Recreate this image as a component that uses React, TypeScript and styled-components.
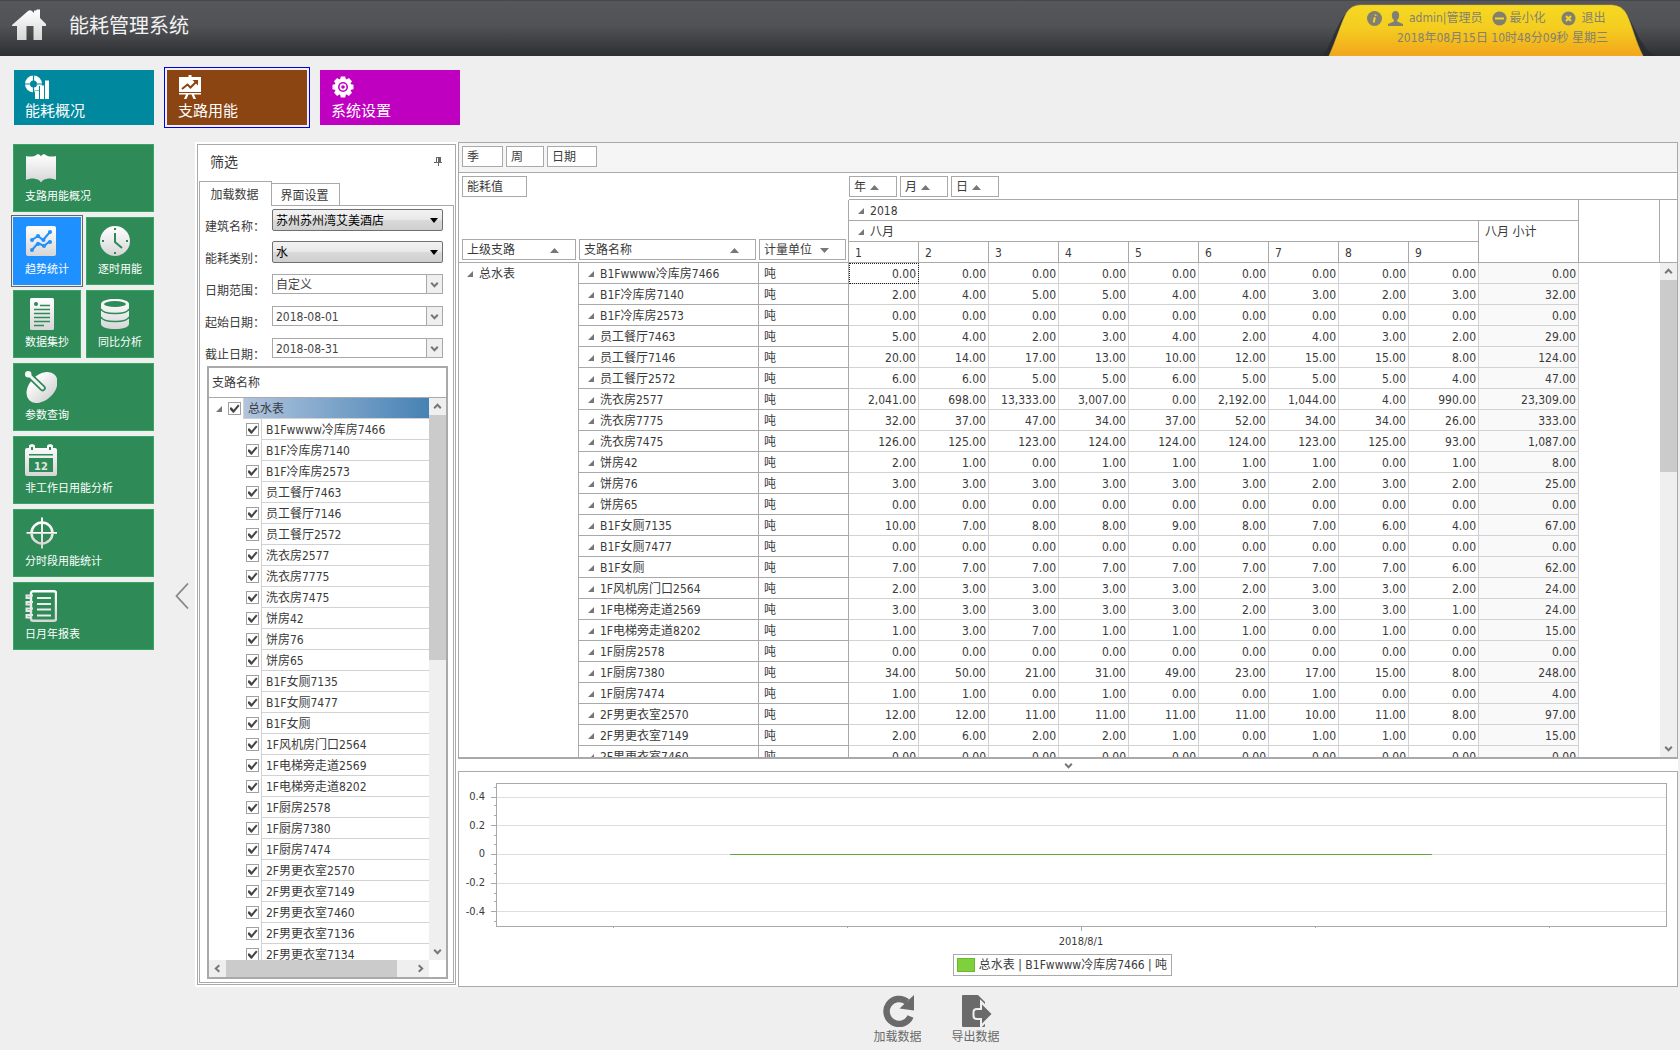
import React, { useState } from 'react';
import styled, { createGlobalStyle, css } from 'styled-components';

const LINE = '#a9a9a9';
const SOFT = '#d2d2d2';
const TEXT = '#3a3a3a';

const Global = createGlobalStyle`
  *, *::before, *::after { box-sizing: border-box; }
  body {
    margin: 0;
    background: #efefef;
    color: ${TEXT};
    font: 12px/16px 'DejaVu Sans Condensed', 'Noto Sans CJK SC', sans-serif;
  }
  button, input, select { font: inherit; color: inherit; margin: 0; }
  button { cursor: pointer; padding: 0; border: 0; background: none; text-align: left; }
  svg { display: block; flex: none; }
`;

const Page = styled.div`
  display: flex;
  flex-direction: column;
  height: 100vh;
  overflow: hidden;
`;

/* ---------- header ---------- */

const Header = styled.header`
  display: flex;
  align-items: center;
  flex: none;
  height: 56px;
  padding: 0 20px 0 12px;
  border-top: 1px solid #47484b;
  background: linear-gradient(#56575b, #515256 45%, #2d3032);
`;

const Brand = styled.div`
  display: flex;
  align-items: center;
  gap: 21px;
  margin-right: auto;
  padding-bottom: 8px;
`;

const Title = styled.h1`
  margin: 0;
  color: #f2f2f2;
  font: 400 20px/28px 'Noto Sans CJK SC', sans-serif;
`;

const UserTab = styled.div`
  position: relative;
  width: 340px;
  height: 55px;
  padding-top: 7px;
  color: #84826f;
`;

const TabShape = styled.svg`
  position: absolute;
  left: 0;
  bottom: 0;
`;

const UserRow = styled.div<{ $indent: number }>`
  position: relative;
  display: flex;
  align-items: center;
  height: 20px;
  padding-left: ${(p) => p.$indent}px;
  white-space: pre;
`;

const UserButton = styled.button<{ $gap: number; $after: number }>`
  display: flex;
  align-items: center;
  gap: ${(p) => p.$gap}px;
  margin-right: ${(p) => p.$after}px;
`;

/* ---------- tiles ---------- */

const TopNav = styled.nav`
  display: flex;
  gap: 13px;
  flex: none;
  padding: 14px 14px 17px;
`;

const TopTile = styled.button<{ $color: string; $active?: boolean }>`
  display: flex;
  flex-direction: column;
  justify-content: space-between;
  width: 140px;
  height: 55px;
  padding: 5px 11px;
  background: ${(p) => p.$color};
  color: #fff;
  font: 15px/20px 'Noto Sans CJK SC', sans-serif;
  ${(p) => p.$active && css`
    outline: 1px solid #0000e0;
    outline-offset: 2px;
  `}
`;

const Main = styled.div`
  display: flex;
  flex: 1;
  min-height: 0;
  padding-right: 2px;
`;

const SideNav = styled.nav`
  display: grid;
  grid-template-columns: 68px 68px;
  grid-auto-rows: 68px;
  gap: 5px;
  flex: none;
  width: 154px;
  padding: 2px 0 0 13px;
`;

const SideTile = styled.button<{ $wide?: boolean; $active?: boolean }>`
  display: flex;
  flex-direction: column;
  justify-content: space-between;
  grid-column: ${(p) => (p.$wide ? 'span 2' : 'span 1')};
  padding: 7px 11px 8px;
  border: 1px solid #35a763;
  background: #2e8b57;
  color: #fff;
  font: 11px/16px 'Noto Sans CJK SC', sans-serif;
  white-space: nowrap;
  ${(p) => p.$active && css`
    border-color: #1e90ff;
    background: #1e90ff;
    outline: 1px solid #666;
    outline-offset: 1px;
  `}
`;

const Collapse = styled.button`
  display: flex;
  align-items: center;
  justify-content: center;
  flex: none;
  width: 41px;
  padding-left: 15px;
`;

const Column = styled.div`
  display: flex;
  flex-direction: column;
  flex: 1;
  min-width: 0;
`;

const Workspace = styled.main`
  display: flex;
  flex: 1;
  min-height: 0;
  background: #fff;
`;

/* ---------- filter panel ---------- */

const FilterPanel = styled.section`
  display: flex;
  flex-direction: column;
  flex: none;
  width: 259px;
  margin: 2px;
  padding: 0 1px 1px;
  border: 1px solid ${LINE};
`;

const FilterHead = styled.div`
  display: flex;
  align-items: center;
  justify-content: space-between;
  flex: none;
  height: 36px;
  padding: 0 12px 4px 11px;
`;

const FilterTitle = styled.h2`
  margin: 0;
  font: 400 14px/20px 'Noto Sans CJK SC', sans-serif;
`;

const Tabs = styled.div`
  display: flex;
  align-items: flex-end;
  flex: none;
`;

const Tab = styled.button<{ $active?: boolean }>`
  position: relative;
  height: ${(p) => (p.$active ? 25 : 22)}px;
  width: ${(p) => (p.$active ? 73 : 68)}px;
  margin-bottom: ${(p) => (p.$active ? -1 : 0)}px;
  padding: 2px 2px 0 0;
  border: 1px solid ${LINE};
  border-left-width: ${(p) => (p.$active ? 1 : 0)}px;
  border-bottom: 0;
  background: #fff;
  text-align: center;
  z-index: ${(p) => (p.$active ? 1 : 0)};
`;

const TabPage = styled.div`
  display: flex;
  flex-direction: column;
  flex: 1;
  min-height: 0;
  border: 1px solid ${LINE};
`;

const Form = styled.form`
  display: grid;
  gap: 10px;
  flex: none;
  padding: 3px 10px 7px 5px;
`;

const FormRow = styled.div`
  display: flex;
  height: 22px;
  align-items: center;
`;

const Label = styled.label`
  align-self: flex-start;
  flex: none;
  width: 67px;
  padding-top: 10px;
`;

const Field = styled.div<{ $raised?: boolean }>`
  position: relative;
  display: flex;
  flex: 1;
  min-width: 0;
  height: ${(p) => (p.$raised ? 22 : 20)}px;
  border: 1px solid ${(p) => (p.$raised ? '#707070' : LINE)};
  border-radius: ${(p) => (p.$raised ? 2 : 0)}px;
  background: ${(p) => (p.$raised ? 'linear-gradient(#f2f2f2, #e8e8e8 50%, #d9d9d9 52%, #cfcfcf)' : '#fff')};
  color: ${(p) => (p.$raised ? '#000' : '#444')};
`;

const fieldText = css`
  flex: 1;
  min-width: 0;
  padding: 2px 3px 0;
  border: 0;
  background: none;
  outline: 0;
`;

const Select = styled.select`
  ${fieldText}
  appearance: none;
`;

const TextInput = styled.input`
  ${fieldText}
`;

const DropMark = styled.span<{ $boxed?: boolean }>`
  display: flex;
  align-items: center;
  justify-content: center;
  width: ${(p) => (p.$boxed ? 16 : 17)}px;
  border-left: ${(p) => (p.$boxed ? `1px solid ${LINE}` : '0')};
  background: ${(p) => (p.$boxed ? '#efefef' : 'none')};
  pointer-events: none;
`;

const TreeBox = styled.div`
  display: flex;
  flex-direction: column;
  flex: 1;
  min-height: 0;
  margin: 0 5px 3px 7px;
  border: 2px solid ${LINE};
`;

const TreeHead = styled.div`
  flex: none;
  height: 30px;
  padding-left: 3px;
  border-bottom: 1px solid ${LINE};
  line-height: 31px;
`;

const TreeBody = styled.div`
  display: flex;
  flex: 1;
  min-height: 0;
`;

const TreeList = styled.ul`
  flex: 1;
  min-width: 0;
  margin: 0;
  padding: 0;
  overflow: hidden;
  list-style: none;
`;

const TreeRow = styled.li<{ $root?: boolean }>`
  display: flex;
  align-items: center;
  gap: ${(p) => (p.$root ? 6 : 0)}px;
  height: 21px;
  padding-left: ${(p) => (p.$root ? 7 : 37)}px;
`;

const TreeLabel = styled.label<{ $root?: boolean }>`
  display: flex;
  flex: 1;
  align-items: center;
  gap: 2px;
  height: 21px;
`;

const TreeText = styled.span<{ $root?: boolean }>`
  flex: 1;
  height: 21px;
  padding-left: 4px;
  border-left: 1px solid ${SOFT};
  border-bottom: 1px solid ${SOFT};
  background: ${(p) => (p.$root ? 'linear-gradient(90deg, #b0c4de, #4682b4)' : 'none')};
  line-height: 23px;
  white-space: nowrap;
`;

const Check = styled.input`
  appearance: none;
  flex: none;
  width: 13px;
  height: 13px;
  border: 1px solid #a0a0a0;
  background: #fff;
  &:checked::before {
    content: '';
    display: block;
    width: 11px;
    height: 11px;
    background: #444;
    clip-path: polygon(9% 42%, 25% 42%, 42% 62%, 82% 14%, 96% 24%, 44% 88%, 36% 88%, 9% 58%);
  }
`;

/* ---------- scroll bars ---------- */

const Bar = styled.div<{ $horizontal?: boolean }>`
  display: flex;
  flex: none;
  flex-direction: ${(p) => (p.$horizontal ? 'row' : 'column')};
  ${(p) => (p.$horizontal ? 'height: 17px; margin-right: 17px;' : 'width: 17px;')}
  background: #efefef;
`;

const BarArrow = styled.button`
  display: flex;
  align-items: center;
  justify-content: center;
  flex: none;
  width: 17px;
  height: 17px;
`;

const BarPart = styled.div<{ $grow: number; $thumb?: boolean }>`
  flex: ${(p) => p.$grow} 0 0;
  background: ${(p) => (p.$thumb ? '#cbcbcb' : 'none')};
`;

/* ---------- pivot ---------- */

const Results = styled.section`
  display: flex;
  flex-direction: column;
  flex: 1;
  min-width: 0;
`;

const Pivot = styled.div`
  display: flex;
  flex-direction: column;
  flex: 1;
  min-height: 0;
  border: 1px solid ${LINE};
  border-bottom-width: 2px;
`;

const FilterBar = styled.div`
  display: flex;
  gap: 3px;
  flex: none;
  height: 30px;
  padding: 3px;
  border-bottom: 1px solid ${LINE};
  background: #f5f5f5;
`;

const FieldButton = styled.button<{ $w: number; $spread?: boolean }>`
  display: flex;
  align-items: center;
  justify-content: ${(p) => (p.$spread ? 'space-between' : 'flex-start')};
  gap: 4px;
  width: ${(p) => p.$w}px;
  height: 21px;
  padding: 1px ${(p) => (p.$spread ? 16 : 0)}px 0 4px;
  border: 1px solid ${LINE};
  background: #fff;
`;

const FieldGroup = styled.div`
  display: flex;
  gap: 3px;
`;

const Table = styled.table`
  width: 100%;
  table-layout: fixed;
  border-collapse: separate;
  border-spacing: 0;
`;

const Head = styled.th<{ $pad?: number; $right?: boolean; $area?: boolean; $bottom?: boolean }>`
  height: ${(p) => (p.$area ? 27 : 21)}px;
  padding: ${(p) => (p.$area ? 3 : 0)}px 0 0 ${(p) => p.$pad ?? 0}px;
  border-bottom: ${(p) => (p.$bottom === false ? '0' : `1px solid ${LINE}`)};
  border-right: ${(p) => (p.$right ? `1px solid ${LINE}` : '0')};
  font-weight: 400;
  text-align: left;
  vertical-align: top;
  line-height: 20px;
`;

const HeadText = styled.span`
  display: flex;
  align-items: center;
  gap: 6px;
  height: 20px;
  padding-top: 2px;
  white-space: nowrap;
`;

const Corner = styled(Head)`
  padding: 0 0 2px 3px;
  vertical-align: bottom;
`;

const BodyWrap = styled.div`
  display: flex;
  flex: 1;
  min-height: 0;
`;

const BodyClip = styled.div`
  flex: 1;
  min-width: 0;
  overflow: hidden;
`;

const RowHead = styled.th<{ $pad: number }>`
  height: 21px;
  padding: 0 0 0 ${(p) => p.$pad}px;
  border-right: 1px solid ${LINE};
  border-bottom: 1px solid ${LINE};
  font-weight: 400;
  text-align: left;
  vertical-align: top;
`;

const Cell = styled.td<{ $total?: boolean; $focus?: boolean }>`
  height: 21px;
  padding: 2px 2px 0 0;
  border-right: 1px solid ${SOFT};
  border-bottom: 1px solid ${SOFT};
  background: ${(p) => (p.$total ? '#f9f9f9' : '#fff')};
  line-height: 18px;
  text-align: right;
  ${(p) => p.$focus && css`
    outline: 1px dotted #222;
    outline-offset: -1px;
  `}
`;

const Splitter = styled.button`
  display: flex;
  align-items: center;
  justify-content: center;
  flex: none;
  height: 12px;
`;

/* ---------- chart ---------- */

const ChartPanel = styled.div`
  display: grid;
  grid-template-columns: 37px 1fr;
  grid-template-rows: 143px 28px 22px;
  flex: none;
  height: 216px;
  padding: 11px 11px 0 0;
  border: 1px solid ${LINE};
  font-size: 11px;
`;

const AxisY = styled.div`
  display: flex;
  flex-direction: column;
  padding-right: 11px;
  text-align: right;
`;

const AxisYLabel = styled.span`
  display: flex;
  flex: 1;
  align-items: center;
  justify-content: flex-end;
`;

const Plot = styled.svg`
  width: 100%;
  height: 143px;
  overflow: visible;
`;

const AxisX = styled.div`
  grid-column: 2;
  padding-top: 8px;
  text-align: center;
`;

const Legend = styled.div`
  grid-column: 1 / -1;
  display: flex;
  align-items: center;
  justify-self: center;
  gap: 4px;
  height: 22px;
  padding: 0 4px 0 3px;
  border: 1px solid ${LINE};
  font-size: 12px;
`;

const Swatch = styled.span`
  width: 18px;
  height: 14px;
  border: 1px solid #6fb52f;
  background: #7fd13b;
`;

/* ---------- footer ---------- */

const Footer = styled.footer`
  display: flex;
  justify-content: center;
  gap: 30px;
  flex: none;
  height: 63px;
  padding-top: 8px;
`;

const FooterButton = styled.button`
  display: flex;
  flex-direction: column;
  align-items: center;
  gap: 2px;
  width: 48px;
  height: 52px;
  color: #6a6a6a;
`;

/* ---------- glyphs ---------- */

const Chevron = ({ dir }: { dir: 'up' | 'down' | 'left' | 'right' }) => {
  const turn = { up: 0, right: 90, down: 180, left: 270 }[dir];
  return (
    <svg width="9" height="9" viewBox="0 0 9 9" fill="none" stroke="#777" strokeWidth="2">
      <path d="M1.2 6.3 4.5 2.8 7.8 6.3" transform={`rotate(${turn} 4.5 4.5)`} />
    </svg>
  );
};

const Open = () => (
  <svg width="6" height="6" viewBox="0 0 6 6"><path d="M6 0V6H0Z" fill="#777" /></svg>
);

const Sort = ({ down }: { down?: boolean }) => (
  <svg width="9" height="5" viewBox="0 0 9 5">
    <path d={down ? 'M0 0H9L4.5 5Z' : 'M0 5H9L4.5 0Z'} fill="#777" />
  </svg>
);

const ScrollBar = ({ horizontal, thumb, rest }: { horizontal?: boolean; thumb: number; rest: number }) => (
  <Bar $horizontal={horizontal}>
    <BarArrow type="button" aria-label={horizontal ? '向左' : '向上'}><Chevron dir={horizontal ? 'left' : 'up'} /></BarArrow>
    <BarPart $grow={thumb} $thumb />
    <BarPart $grow={rest} />
    <BarArrow type="button" aria-label={horizontal ? '向右' : '向下'}><Chevron dir={horizontal ? 'right' : 'down'} /></BarArrow>
  </Bar>
);

const G = 'url(#silver)';
const sideIcon = (children: React.ReactNode) => (
  <svg width="32" height="32" viewBox="0 0 32 32">{children}</svg>
);

const icons = {
  book: sideIcon(
    <path fill={G} d="M1 4C4 5 9 5 12 2.5C14 1.500 15.500 3 16 4.500C16.500 3 18 1.500 20 2.500C23 5 28 5 31 4V28C27 26 22 26 18.500 28C17 28.500 16.500 30 16 30.500C15.500 30 15 28.500 13.500 28C10 26 5 26 1 28Z" />,
  ),
  trend: sideIcon(
    <>
      <rect x="1" y="1" width="30" height="30" rx="2" fill={G} />
      <g stroke="#1e90ff" strokeWidth="2" fill="none">
        <path d="M7 15 13 11 18 15 25 7M7 25 13 18 19 21 25 16" />
      </g>
      <g fill="#1e90ff">
        {[[7, 15], [13, 11], [18.5, 15], [25, 7], [7, 25], [13, 19], [19, 21], [25, 17]].map(([x, y]) => (
          <circle key={`${x}-${y}`} cx={x} cy={y} r="2" />
        ))}
      </g>
    </>,
  ),
  clock: sideIcon(
    <>
      <circle cx="17" cy="16" r="15" fill={G} />
      <path d="M17 8V17L24 23" stroke="#2e8b57" strokeWidth="2" fill="none" />
      <path d="M16 3h2v2h-2zM16 27h2v2h-2zM4 15h2v2H4zM28 15h2v2h-2z" fill="#2e8b57" />
    </>,
  ),
  doc: sideIcon(
    <>
      <rect x="5" y="0" width="24" height="32" rx="1.500" fill={G} />
      <circle cx="11" cy="6" r="2" fill="#2e8b57" />
      <path d="M15 7.500H25M9 11.500H25M9 15.500H25M9 19.500H25M9 23.500H25M9 27.500H19" stroke="#2e8b57" strokeWidth="1.500" />
    </>,
  ),
  db: sideIcon(
    <>
      <path fill={G} d="M3 6C3 3 9 1 17 1S31 3 31 6V26C31 29 25 31 17 31S3 29 3 26Z" />
      <ellipse cx="17" cy="6" rx="11" ry="3" fill="#2e8b57" />
      <path d="M3 11C4 14 10 15.500 17 15.500S30 14 31 11M3 19C4 22 10 23.500 17 23.500S30 22 31 19" stroke="#2e8b57" strokeWidth="1.500" fill="none" />
    </>,
  ),
  dish: sideIcon(
    <>
      <ellipse cx="17" cy="16.500" rx="18" ry="12.500" transform="rotate(-45 17 16.500)" fill={G} />
      <path d="M3 3 17.500 17" stroke="#2e8b57" strokeWidth="6.500" strokeLinecap="round" />
      <path d="M3 3 17.500 17" stroke="#f4f4f4" strokeWidth="3" strokeLinecap="round" />
      <circle cx="3.200" cy="3.200" r="3.200" fill="#f8f8f8" />
    </>,
  ),
  calendar: sideIcon(
    <>
      <path fill={G} fillRule="evenodd" d="M2 4H4V2C4 -0.500 10 -0.500 10 2V4H22V2C22 -0.500 28 -0.500 28 2V4H30Q32 4 32 6V30Q32 32 30 32H2Q0 32 0 30V6Q0 4 2 4ZM6 3V6H8V3ZM24 3V6H26V3ZM4 10V11.500H28V10ZM4 14V28H28V14Z" />
      <text x="16" y="25.500" textAnchor="middle" fontSize="11" fontWeight="700" fontFamily="DejaVu Sans Condensed, sans-serif" fill="#e4e4e4">12</text>
    </>,
  ),
  target: sideIcon(
    <g fill="none" stroke={G} strokeWidth="2">
      <circle cx="17" cy="16" r="10.500" strokeWidth="2.500" />
      <rect x="2" y="15.500" width="30" height="1" strokeWidth="1" />
      <rect x="16.500" y="1" width="1" height="30" strokeWidth="1" />
    </g>,
  ),
  notebook: sideIcon(
    <g fill="none" stroke={G}>
      <rect x="6" y="1.200" width="25" height="29.600" rx="2" strokeWidth="2.400" />
      <path d="M12 8H26M12 14H26M12 19.500H26M12 25.500H26" stroke="#ececec" strokeWidth="2" />
      <path d="M8 5.500H1.500V8H6M8 12H1.500V14.500H6M8 18.500H1.500V21H6M8 25H1.500V27.500H6" stroke="#e8e8e8" strokeWidth="2" />
    </g>,
  ),
};

const gearTeeth = Array.from({ length: 8 }, (_, i) => i * 45);

/* ---------- data ---------- */

const topTiles = [
  {
    label: '能耗概况',
    color: '#00899e',
    icon: (
      <svg width="24" height="24" viewBox="0 0 24 24" fill="#fff">
        <circle cx="8.500" cy="9" r="6" fill="none" stroke="#fff" strokeWidth="5" />
        <path d="M8.500 0V6M8.500 12V18M-0.500 9H5.500M11.500 9H17.500" stroke="#00899e" strokeWidth="1.200" />
        <path d="M9.500 15.500H14V11H18.500V5H24V24H9.500Z" fill="#00899e" />
        <path d="M10 16H14V24H10ZM15 10.500H19V24H15ZM20 5.500H24V24H20Z" />
      </svg>
    ),
  },
  {
    label: '支路用能',
    color: '#8b4513',
    active: true,
    icon: (
      <svg width="24" height="24" viewBox="0 0 24 24" fill="#fff">
        <path d="M10.500 0H13.500V2H23V17H1V2H10.500ZM1 18H23V19.500H1ZM8 19.500H10.500L8.500 24H6ZM13.500 19.500H16L18 24H15.500Z" />
        <path d="M4 14 9.500 9.500 12.500 12.500 18 7" fill="none" stroke="#8b4513" strokeWidth="2" />
        <path d="M14.500 5H20V10.500Z" fill="#8b4513" />
      </svg>
    ),
  },
  {
    label: '系统设置',
    color: '#c000c0',
    icon: (
      <svg width="24" height="24" viewBox="0 0 24 24" fill="#fff">
        {gearTeeth.map((a) => (
          <path key={a} d="M9 5 9.800 1.500H14.200L15 5Z" transform={`rotate(${a} 12 12)`} />
        ))}
        <circle cx="12" cy="12" r="8.300" />
        <circle cx="12" cy="12" r="5" fill="#c000c0" />
        <circle cx="12" cy="12" r="3.400" />
        <circle cx="12" cy="12" r="1.800" fill="#c000c0" />
      </svg>
    ),
  },
];

const sideTiles = [
  { label: '支路用能概况', icon: icons.book, wide: true },
  { label: '趋势统计', icon: icons.trend, active: true },
  { label: '逐时用能', icon: icons.clock },
  { label: '数据集抄', icon: icons.doc },
  { label: '同比分析', icon: icons.db },
  { label: '参数查询', icon: icons.dish, wide: true },
  { label: '非工作日用能分析', icon: icons.calendar, wide: true },
  { label: '分时段用能统计', icon: icons.target, wide: true },
  { label: '日月年报表', icon: icons.notebook, wide: true },
];

const rows: [string, number[], number][] = [
  ['B1Fwwww冷库房7466', [0, 0, 0, 0, 0, 0, 0, 0, 0], 0],
  ['B1F冷库房7140', [2, 4, 5, 5, 4, 4, 3, 2, 3], 32],
  ['B1F冷库房2573', [0, 0, 0, 0, 0, 0, 0, 0, 0], 0],
  ['员工餐厅7463', [5, 4, 2, 3, 4, 2, 4, 3, 2], 29],
  ['员工餐厅7146', [20, 14, 17, 13, 10, 12, 15, 15, 8], 124],
  ['员工餐厅2572', [6, 6, 5, 5, 6, 5, 5, 5, 4], 47],
  ['洗衣房2577', [2041, 698, 13333, 3007, 0, 2192, 1044, 4, 990], 23309],
  ['洗衣房7775', [32, 37, 47, 34, 37, 52, 34, 34, 26], 333],
  ['洗衣房7475', [126, 125, 123, 124, 124, 124, 123, 125, 93], 1087],
  ['饼房42', [2, 1, 0, 1, 1, 1, 1, 0, 1], 8],
  ['饼房76', [3, 3, 3, 3, 3, 3, 2, 3, 2], 25],
  ['饼房65', [0, 0, 0, 0, 0, 0, 0, 0, 0], 0],
  ['B1F女厕7135', [10, 7, 8, 8, 9, 8, 7, 6, 4], 67],
  ['B1F女厕7477', [0, 0, 0, 0, 0, 0, 0, 0, 0], 0],
  ['B1F女厕', [7, 7, 7, 7, 7, 7, 7, 7, 6], 62],
  ['1F风机房门口2564', [2, 3, 3, 3, 3, 2, 3, 3, 2], 24],
  ['1F电梯旁走道2569', [3, 3, 3, 3, 3, 2, 3, 3, 1], 24],
  ['1F电梯旁走道8202', [1, 3, 7, 1, 1, 1, 0, 1, 0], 15],
  ['1F厨房2578', [0, 0, 0, 0, 0, 0, 0, 0, 0], 0],
  ['1F厨房7380', [34, 50, 21, 31, 49, 23, 17, 15, 8], 248],
  ['1F厨房7474', [1, 1, 0, 1, 0, 0, 1, 0, 0], 4],
  ['2F男更衣室2570', [12, 12, 11, 11, 11, 11, 10, 11, 8], 97],
  ['2F男更衣室7149', [2, 6, 2, 2, 1, 0, 1, 1, 0], 15],
  ['2F男更衣室7460', [0, 0, 0, 0, 0, 0, 0, 0, 0], 0],
];

const branches = [...rows.map((r) => r[0]), '2F男更衣室7136', '2F男更衣室7134'];
const days = [1, 2, 3, 4, 5, 6, 7, 8, 9];
const format = (n: number) => n.toLocaleString('en-US', { minimumFractionDigits: 2 });

const Columns = ({ withBar }: { withBar?: boolean }) => (
  <colgroup>
    <col width="120" />
    <col width="180" />
    <col width="90" />
    {days.map((d) => <col key={d} width="70" />)}
    <col width="100" />
    <col />
    {withBar && <col width="17" />}
  </colgroup>
);

const Dropdown = ({ id, value, raised }: { id: string; value: string; raised?: boolean }) => (
  <Field $raised={raised}>
    <Select id={id} defaultValue={value}><option>{value}</option></Select>
    <DropMark $boxed={!raised}>
      {raised
        ? <svg width="8" height="5" viewBox="0 0 8 5"><path d="M0 0H8L4 5Z" fill="#000" /></svg>
        : <Chevron dir="down" />}
    </DropMark>
  </Field>
);

const DateField = ({ id, value }: { id: string; value: string }) => (
  <Field>
    <TextInput id={id} defaultValue={value} />
    <DropMark $boxed><Chevron dir="down" /></DropMark>
  </Field>
);

const TopBar = () => (
  <Header>
    <Brand>
      <svg width="36" height="36" viewBox="0 0 36 36">
        <path fill={G} d="M0 18 16 4C17.500 3 18.500 3 20 4L22 6V3.500H24.500V2.500H28V11L34 17V19H30V33H21.500V19H14.500V33H5V19H0Z" />
      </svg>
      <Title>能耗管理系统</Title>
    </Brand>
    <UserTab>
      <TabShape width="340" height="55" viewBox="0 0 340 55">
        <defs>
          <linearGradient id="tab" x1="0" y1="0" x2="0" y2="1">
            <stop offset="0" stopColor="#f5d922" />
            <stop offset="0.450" stopColor="#f4cd20" />
            <stop offset="1" stopColor="#f3a51c" />
          </linearGradient>
        </defs>
        <path fill="#292c2e" opacity="0.800" d="M2 55C12 46 18 12 36 4H296C314 12 316 46 336 55Z" />
        <path fill="url(#tab)" stroke="#d9b43a" strokeWidth="0.500" d="M9 55C17 37 22 19 27 11Q32 4 40 4H292Q302 4 307 14C313 27 315 39 323 55Z" />
      </TabShape>
      <UserRow $indent={47}>
        <UserButton type="button" aria-label="关于" $gap={0} $after={6}>
          <svg width="15" height="15" viewBox="0 0 15 15">
            <circle cx="7.500" cy="7.500" r="7.500" fill="#807f72" />
            <path d="M8.700 3.500 8.400 4.800M7.900 6.200 6.700 11.500" stroke="#f4d322" strokeWidth="2" />
          </svg>
        </UserButton>
        <UserButton type="button" $gap={6} $after={10}>
          <svg width="15" height="15" viewBox="0 0 15 15" fill="#807f72">
            <ellipse cx="7.500" cy="4.500" rx="3.600" ry="4.500" />
            <path d="M5.800 7H9.200V10.500L15 13V15H0V13L5.800 10.500Z" />
          </svg>
          admin|管理员
        </UserButton>
        <UserButton type="button" $gap={2} $after={15}>
          <svg width="15" height="15" viewBox="0 0 15 15">
            <circle cx="7.500" cy="7.500" r="7" fill="#807f72" />
            <path d="M3 7.500H12" stroke="#f4d322" strokeWidth="2" />
          </svg>
          最小化
        </UserButton>
        <UserButton type="button" $gap={6} $after={0}>
          <svg width="15" height="15" viewBox="0 0 15 15">
            <circle cx="7.500" cy="7.500" r="7" fill="#807f72" />
            <path d="M5 5 10 10M10 5 5 10" stroke="#f4d322" strokeWidth="2.200" />
          </svg>
          退出
        </UserButton>
      </UserRow>
      <UserRow $indent={77}>2018年08月15日 10时48分09秒 星期三</UserRow>
    </UserTab>
  </Header>
);

const FilterSide = () => {
  const [off, setOff] = useState<string[]>([]);
  const toggle = (name: string) =>
    setOff((list) => (list.includes(name) ? list.filter((n) => n !== name) : [...list, name]));
  return (
    <FilterPanel>
      <FilterHead>
        <FilterTitle>筛选</FilterTitle>
        <button type="button" aria-label="固定">
          <svg width="8" height="9" viewBox="0 0 8 9" shapeRendering="crispEdges" fill="#666">
            <path d="M1 0H7V1H3V5H2V0ZM4 0H7V5H4ZM0 5H8V6H0ZM4 6H5V9H4Z" />
          </svg>
        </button>
      </FilterHead>
      <Tabs role="tablist">
        <Tab type="button" role="tab" aria-selected $active>加载数据</Tab>
        <Tab type="button" role="tab">界面设置</Tab>
      </Tabs>
      <TabPage>
        <Form>
          <FormRow><Label htmlFor="building">建筑名称：</Label><Dropdown id="building" value="苏州苏州湾艾美酒店" raised /></FormRow>
          <FormRow><Label htmlFor="kind">能耗类别：</Label><Dropdown id="kind" value="水" raised /></FormRow>
          <FormRow><Label htmlFor="range">日期范围：</Label><Dropdown id="range" value="自定义" /></FormRow>
          <FormRow><Label htmlFor="from">起始日期：</Label><DateField id="from" value="2018-08-01" /></FormRow>
          <FormRow><Label htmlFor="to">截止日期：</Label><DateField id="to" value="2018-08-31" /></FormRow>
        </Form>
        <TreeBox>
          <TreeHead>支路名称</TreeHead>
          <TreeBody>
            <TreeList>
              <TreeRow $root>
                <Open />
                <TreeLabel>
                  <Check type="checkbox" checked={!off.includes('总水表')} onChange={() => toggle('总水表')} />
                  <TreeText $root>总水表</TreeText>
                </TreeLabel>
              </TreeRow>
              {branches.map((name) => (
                <TreeRow key={name}>
                  <TreeLabel>
                    <Check type="checkbox" checked={!off.includes(name)} onChange={() => toggle(name)} />
                    <TreeText>{name}</TreeText>
                  </TreeLabel>
                </TreeRow>
              ))}
            </TreeList>
            <ScrollBar thumb={245} rest={283} />
          </TreeBody>
          <ScrollBar horizontal thumb={171} rest={15} />
        </TreeBox>
      </TabPage>
    </FilterPanel>
  );
};

const PivotGrid = () => (
  <Pivot>
    <FilterBar>
      <FieldButton type="button" $w={41}>季</FieldButton>
      <FieldButton type="button" $w={38}>周</FieldButton>
      <FieldButton type="button" $w={50}>日期</FieldButton>
    </FilterBar>
    <Table>
      <Columns withBar />
      <thead>
        <tr>
          <Head colSpan={3} $area $pad={3} $bottom={false}><FieldButton type="button" $w={65}>能耗值</FieldButton></Head>
          <Head colSpan={12} $area>
            <FieldGroup>
              {['年', '月', '日'].map((f) => (
                <FieldButton key={f} type="button" $w={48}>{f}<Sort /></FieldButton>
              ))}
            </FieldGroup>
          </Head>
        </tr>
        <tr>
          <Corner colSpan={3} rowSpan={3} $right>
            <FieldGroup>
              <FieldButton type="button" $w={114} $spread>上级支路<Sort /></FieldButton>
              <FieldButton type="button" $w={177} $spread>支路名称<Sort /></FieldButton>
              <FieldButton type="button" $w={87} $spread>计量单位<Sort down /></FieldButton>
            </FieldGroup>
          </Corner>
          <Head colSpan={10} $pad={9} $right><HeadText><Open />2018</HeadText></Head>
          <Head rowSpan={3} $right />
          <Head rowSpan={3} />
        </tr>
        <tr>
          <Head colSpan={9} $pad={9} $right><HeadText><Open />八月</HeadText></Head>
          <Head rowSpan={2} $pad={6} $right><HeadText>八月 小计</HeadText></Head>
        </tr>
        <tr>
          {days.map((d) => <Head key={d} $pad={6} $right><HeadText>{d}</HeadText></Head>)}
        </tr>
      </thead>
    </Table>
    <BodyWrap>
      <BodyClip>
        <Table>
          <Columns />
          <tbody>
            {rows.map(([name, values, total], r) => (
              <tr key={name}>
                {r === 0 && (
                  <RowHead rowSpan={rows.length} $pad={8}><HeadText><Open />总水表</HeadText></RowHead>
                )}
                <RowHead $pad={9}><HeadText><Open />{name}</HeadText></RowHead>
                <RowHead $pad={5}><HeadText>吨</HeadText></RowHead>
                {values.map((v, c) => (
                  <Cell key={days[c]} $focus={r === 0 && c === 0}>{format(v)}</Cell>
                ))}
                <Cell $total>{format(total)}</Cell>
                <td />
              </tr>
            ))}
          </tbody>
        </Table>
      </BodyClip>
      <ScrollBar thumb={192} rest={268} />
    </BodyWrap>
  </Pivot>
);

const minorY = [3, 16, 23, 37, 43, 57, 63, 77, 83, 97];

const Chart = () => (
  <ChartPanel>
    <AxisY>
      {['0.4', '0.2', '0', '-0.2', '-0.4'].map((t) => <AxisYLabel key={t}>{t}</AxisYLabel>)}
    </AxisY>
    <Plot shapeRendering="crispEdges">
      {[10, 30, 50, 70, 90].map((y) => (
        <g key={y}>
          <line x1="0" x2="100%" y1={`${y}%`} y2={`${y}%`} stroke="#dedede" />
          <line x1="-5" x2="0" y1={`${y}%`} y2={`${y}%`} stroke={LINE} />
        </g>
      ))}
      {minorY.map((y) => <line key={y} x1="-2" x2="0" y1={`${y}%`} y2={`${y}%`} stroke={LINE} />)}
      <rect width="100%" height="100%" fill="none" stroke={LINE} />
      {[10, 30, 70, 90].map((x) => (
        <line key={x} x1={`${x}%`} x2={`${x}%`} y1="143" y2="145" stroke={LINE} />
      ))}
      <line x1="50%" x2="50%" y1="143" y2="148" stroke={LINE} />
      <line x1="20%" x2="80%" y1="50%" y2="50%" stroke="#63a537" />
    </Plot>
    <AxisX>2018/8/1</AxisX>
    <Legend><Swatch />总水表 | B1Fwwww冷库房7466 | 吨</Legend>
  </ChartPanel>
);

export default function App() {
  return (
    <Page>
      <Global />
      <svg width="0" height="0" style={{ position: 'absolute' }}>
        <defs>
          <linearGradient id="silver" x1="0" y1="0" x2="0" y2="1">
            <stop offset="0" stopColor="#fff" />
            <stop offset="1" stopColor="#d6d6d6" />
          </linearGradient>
        </defs>
      </svg>
      <TopBar />
      <TopNav>
        {topTiles.map((t) => (
          <TopTile key={t.label} type="button" $color={t.color} $active={t.active}>{t.icon}{t.label}</TopTile>
        ))}
      </TopNav>
      <Main>
        <SideNav>
          {sideTiles.map((t) => (
            <SideTile key={t.label} type="button" $wide={t.wide} $active={t.active}>{t.icon}{t.label}</SideTile>
          ))}
        </SideNav>
        <Collapse type="button" aria-label="收起">
          <svg width="14" height="26" viewBox="0 0 14 26" fill="none" stroke="#888" strokeWidth="1.800">
            <path d="M13 0.500 1.500 13 13 25.500" />
          </svg>
        </Collapse>
        <Column>
          <Workspace>
            <FilterSide />
            <Results>
              <PivotGrid />
              <Splitter type="button" aria-label="收起图表"><Chevron dir="down" /></Splitter>
              <Chart />
            </Results>
          </Workspace>
          <Footer>
            <FooterButton type="button">
              <svg width="32" height="32" viewBox="0 0 32 32">
                <path d="M28.500 21.500A12.500 12.500 0 1 1 25 6.800" fill="none" stroke="#6a6a6a" strokeWidth="6.500" />
                <path d="M32 0V15.500L17.500 13.500Z" fill="#6a6a6a" />
              </svg>
              加载数据
            </FooterButton>
            <FooterButton type="button">
              <svg width="32" height="32" viewBox="0 0 32 32">
                <path d="M2 1Q2 0 3 0H18L25 7V31Q25 32 24 32H3Q2 32 2 31Z" fill="#6a6a6a" />
                <path d="M22 9 32 19 22 29V23H17Q14.500 23 14.500 21V17Q14.500 15 17 15H22Z" fill="#6a6a6a" stroke="#efefef" strokeWidth="4" />
                <path d="M22 9.500 31.500 19 22 28.500V23H17Q14.500 23 14.500 21V17Q14.500 15 17 15H22Z" fill="#6a6a6a" />
              </svg>
              导出数据
            </FooterButton>
          </Footer>
        </Column>
      </Main>
    </Page>
  );
}
